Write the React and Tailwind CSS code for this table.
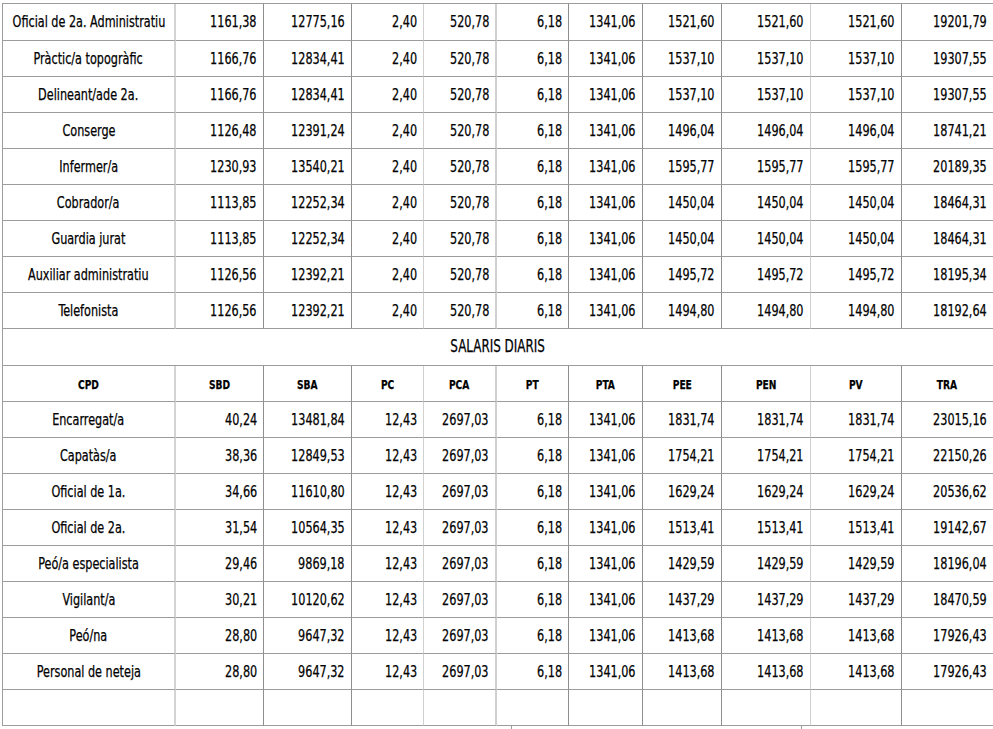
const COLS = 'grid grid-cols-[173px_88px_88px_72px_73px_72px_74px_79px_89px_91px_91px]';

// right-edge line for each column; some lines are light, some dark
const EDGE = [
  'border-r-2 border-r-[#d4d4d4]',
  'border-r border-r-[#8e8e8e]',
  'border-r border-r-[#8e8e8e]',
  'border-r border-r-[#d0d0d0]',
  'border-r-2 border-r-[#d0d0d0]',
  'border-r border-r-[#8e8e8e]',
  'border-r border-r-[#8e8e8e]',
  'border-r border-r-[#8e8e8e]',
  'border-r border-r-[#d0d0d0]',
  'border-r border-r-[#8e8e8e]',
  '',
];

const ANUALS = [
  ['Oficial de 2a. Administratiu', '1161,38', '12775,16', '2,40', '520,78', '6,18', '1341,06', '1521,60', '1521,60', '1521,60', '19201,79'],
  ['Pràctic/a topogràfic', '1166,76', '12834,41', '2,40', '520,78', '6,18', '1341,06', '1537,10', '1537,10', '1537,10', '19307,55'],
  ['Delineant/ade 2a.', '1166,76', '12834,41', '2,40', '520,78', '6,18', '1341,06', '1537,10', '1537,10', '1537,10', '19307,55'],
  ['Conserge', '1126,48', '12391,24', '2,40', '520,78', '6,18', '1341,06', '1496,04', '1496,04', '1496,04', '18741,21'],
  ['Infermer/a', '1230,93', '13540,21', '2,40', '520,78', '6,18', '1341,06', '1595,77', '1595,77', '1595,77', '20189,35'],
  ['Cobrador/a', '1113,85', '12252,34', '2,40', '520,78', '6,18', '1341,06', '1450,04', '1450,04', '1450,04', '18464,31'],
  ['Guardia jurat', '1113,85', '12252,34', '2,40', '520,78', '6,18', '1341,06', '1450,04', '1450,04', '1450,04', '18464,31'],
  ['Auxiliar administratiu', '1126,56', '12392,21', '2,40', '520,78', '6,18', '1341,06', '1495,72', '1495,72', '1495,72', '18195,34'],
  ['Telefonista', '1126,56', '12392,21', '2,40', '520,78', '6,18', '1341,06', '1494,80', '1494,80', '1494,80', '18192,64'],
];

const HEADERS = ['CPD', 'SBD', 'SBA', 'PC', 'PCA', 'PT', 'PTA', 'PEE', 'PEN', 'PV', 'TRA'];

const DIARIS = [
  ['Encarregat/a', '40,24', '13481,84', '12,43', '2697,03', '6,18', '1341,06', '1831,74', '1831,74', '1831,74', '23015,16'],
  ['Capatàs/a', '38,36', '12849,53', '12,43', '2697,03', '6,18', '1341,06', '1754,21', '1754,21', '1754,21', '22150,26'],
  ['Oficial de 1a.', '34,66', '11610,80', '12,43', '2697,03', '6,18', '1341,06', '1629,24', '1629,24', '1629,24', '20536,62'],
  ['Oficial de 2a.', '31,54', '10564,35', '12,43', '2697,03', '6,18', '1341,06', '1513,41', '1513,41', '1513,41', '19142,67'],
  ['Peó/a especialista', '29,46', '9869,18', '12,43', '2697,03', '6,18', '1341,06', '1429,59', '1429,59', '1429,59', '18196,04'],
  ['Vigilant/a', '30,21', '10120,62', '12,43', '2697,03', '6,18', '1341,06', '1437,29', '1437,29', '1437,29', '18470,59'],
  ['Peó/na', '28,80', '9647,32', '12,43', '2697,03', '6,18', '1341,06', '1413,68', '1413,68', '1413,68', '17926,43'],
  ['Personal de neteja', '28,80', '9647,32', '12,43', '2697,03', '6,18', '1341,06', '1413,68', '1413,68', '1413,68', '17926,43'],
];

// the sheet's font is a narrow one; squeeze the condensed fallback to its width
function Txt({ children, right }) {
  return (
    <span
      className={`inline-block whitespace-nowrap scale-x-[0.78] ${
        right ? 'origin-right' : 'origin-center'
      }`}
    >
      {children}
    </span>
  );
}

function Row({ cells, header, tall }) {
  return (
    <div className={COLS}>
      {cells.map((c, i) => {
        const right = !header && i > 0;
        return (
          <div
            key={i}
            className={`${tall ? 'h-[37px]' : 'h-[36px]'} flex items-center border-b border-b-[#9c9c9c] ${EDGE[i]} ${
              header
                ? 'justify-center text-[13px] font-bold pt-[2px]'
                : right
                ? 'justify-end pr-[6px]'
                : 'justify-center'
            }`}
          >
            {c && <Txt right={right}>{c}</Txt>}
          </div>
        );
      })}
    </div>
  );
}

export default function App() {
  return (
    <div className="bg-white w-[993px] h-[729px] overflow-hidden pl-[2px] pt-[3px] text-[16px] text-black [-webkit-text-stroke:0.25px_#000] font-['DejaVu_Sans_Condensed','Liberation_Sans',sans-serif]">
      <div className="border-l border-t border-[#9c9c9c] w-[991px]">
        {ANUALS.map((r, i) => (
          <Row key={i} cells={r} tall={i === 0} />
        ))}
        <div className="h-[37px] flex items-center justify-center border-b border-b-[#9c9c9c] text-[17px]">
          <Txt>SALARIS DIARIS</Txt>
        </div>
        <Row cells={HEADERS} header />
        {DIARIS.map((r, i) => (
          <Row key={i} cells={r} />
        ))}
        <Row cells={['', '', '', '', '', '', '', '', '', '', '']} />
      </div>
      <div className="flex h-[6px]">
        <div className="w-[510px] border-r border-r-[#9c9c9c]" />
        <div className="w-[290px] border-r border-r-[#9c9c9c]" />
      </div>
    </div>
  );
}
